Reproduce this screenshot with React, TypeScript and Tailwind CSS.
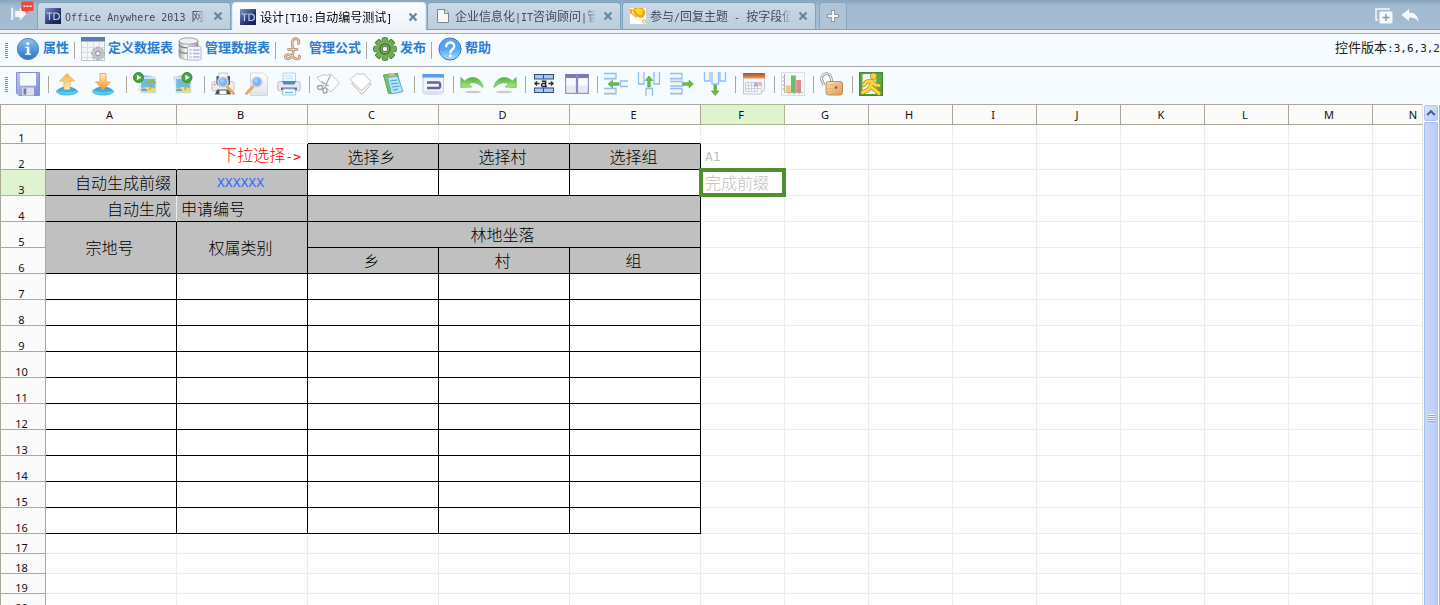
import React from "react";

/* ---------- text helper: CJK at full size, Latin in half-width mono ---------- */

const CJK = "font-['Noto_Sans_CJK_SC',sans-serif]";

function Mixed({ text, latin }: { text: string; latin: string }) {
  return (
    <>
      {text.split(/([\x20-\x7e]+)/).map((part, i) =>
        /^[\x20-\x7e]+$/.test(part) ? (
          <span key={i} className={latin}>
            {part}
          </span>
        ) : (
          part
        ),
      )}
    </>
  );
}

const LATIN_10 = "font-['DejaVu_Sans_Mono',monospace] text-[10px]";
const LATIN_11 = "font-['DejaVu_Sans_Mono',monospace] text-[11px]";
const LATIN_13 = "font-['DejaVu_Sans_Mono',monospace] text-[13px]";

/* ---------- icons ---------- */

function Svg({ children }: { children: React.ReactNode }) {
  return (
    <svg viewBox="0 0 24 24" className="size-6 shrink-0" aria-hidden="true">
      {children}
    </svg>
  );
}

const Defs = () => (
  <svg className="absolute size-0" aria-hidden="true">
    <defs>
      <linearGradient id="blueBall" x1="0" y1="0" x2="0" y2="1">
        <stop offset="0" stopColor="#8cc4f4" />
        <stop offset="1" stopColor="#2b6fc4" />
      </linearGradient>
      <linearGradient id="skyBall" x1="0" y1="0" x2="0" y2="1">
        <stop offset="0" stopColor="#5ca9f3" />
        <stop offset="0.5" stopColor="#4ea6f4" />
        <stop offset="1" stopColor="#a3e8ff" />
      </linearGradient>
      <linearGradient id="steel" x1="0" y1="0" x2="1" y2="0">
        <stop offset="0" stopColor="#a5a5a5" />
        <stop offset="0.35" stopColor="#f8f8f8" />
        <stop offset="1" stopColor="#a0a0a0" />
      </linearGradient>
      <linearGradient id="amberUp" x1="0" y1="0" x2="0" y2="1">
        <stop offset="0" stopColor="#fbb03a" />
        <stop offset="1" stopColor="#fff1cf" />
      </linearGradient>
      <linearGradient id="amberDown" x1="0" y1="0" x2="0" y2="1">
        <stop offset="0" stopColor="#fff0cc" />
        <stop offset="1" stopColor="#f8920f" />
      </linearGradient>
      <linearGradient id="dish" x1="0" y1="0" x2="0" y2="1">
        <stop offset="0" stopColor="#2a9fd8" />
        <stop offset="1" stopColor="#55c4ee" />
      </linearGradient>
      <linearGradient id="leaf" x1="0" y1="0" x2="0" y2="1">
        <stop offset="0" stopColor="#53b043" />
        <stop offset="1" stopColor="#a9ea7c" />
      </linearGradient>
      <linearGradient id="disk" x1="0" y1="0" x2="1" y2="1">
        <stop offset="0" stopColor="#bcc3f2" />
        <stop offset="1" stopColor="#7f88d2" />
      </linearGradient>
      <linearGradient id="td" x1="0" y1="0" x2="1" y2="1">
        <stop offset="0" stopColor="#7f93cf" />
        <stop offset="0.6" stopColor="#27336f" />
        <stop offset="1" stopColor="#141b4c" />
      </linearGradient>
      <linearGradient id="paper" x1="0" y1="0" x2="0" y2="1">
        <stop offset="0" stopColor="#ffffff" />
        <stop offset="1" stopColor="#e2e3e7" />
      </linearGradient>
      <linearGradient id="gold" x1="0" y1="0" x2="1" y2="1">
        <stop offset="0" stopColor="#ffe0b0" />
        <stop offset="1" stopColor="#dc9750" />
      </linearGradient>
      <linearGradient id="calTop" x1="0" y1="0" x2="0" y2="1">
        <stop offset="0" stopColor="#b04c20" />
        <stop offset="1" stopColor="#e79a63" />
      </linearGradient>
    </defs>
  </svg>
);

const InfoIcon = () => (
  <Svg>
    <circle cx="12" cy="12" r="10.6" fill="url(#blueBall)" stroke="#4a86c8" />
    <circle cx="11.8" cy="6.6" r="1.7" fill="#fff" />
    <path d="M9.200 9.800h4.200v6.800h1.600v1.200H9.200v-1.200h1.600v-5.600H9.200z" fill="#fff" />
  </Svg>
);

const GearShape = ({ cx, cy, r, fill, stroke }: { cx: number; cy: number; r: number; fill: string; stroke: string }) => (
  <g transform={`translate(${cx} ${cy}) scale(${r / 10})`}>
    {[0, 45, 90, 135].map((a) => (
      <rect key={a} x="-2.800" y="-11.600" width="5.600" height="23.200" rx="1.200" fill={fill} stroke={stroke} strokeWidth="1" transform={`rotate(${a})`} />
    ))}
    <circle r="8.800" fill={fill} />
  </g>
);

const DefineTableIcon = () => (
  <Svg>
    <rect x="0.5" y="0.5" width="23" height="23" fill="#f4f5f7" stroke="#c3c8d0" />
    <rect x="0" y="0" width="24" height="4.500" fill="#5c7cb4" />
    <path d="M1 10.500h22M1 15.500h22M1 20.500h22M6.500 5v18M12.500 5v18M18.500 5v18" stroke="#dadde3" />
    <GearShape cx={17} cy={16.500} r={5.600} fill="#c4c6c8" stroke="#97999c" />
    <circle cx="17" cy="16.500" r="2.400" fill="#eef0f2" stroke="#8d8f92" />
  </Svg>
);

const DatabaseIcon = () => (
  <Svg>
    <path d="M1 4v15c0 5 19 5 19 0V4z" fill="url(#steel)" stroke="#a2a2a2" strokeWidth="0.700" />
    <ellipse cx="10.500" cy="4" rx="9.500" ry="3.200" fill="#f0f0f0" stroke="#8c8c8c" strokeWidth="0.800" />
    <path d="M1 7.500c0 4.400 19 4.400 19 0M1 13c0 4.400 19 4.400 19 0" fill="none" stroke="#7e7e7e" strokeWidth="1.200" />
    <rect x="9.500" y="9.500" width="13.500" height="13.500" rx="1" fill="#f7f6ff" stroke="#b5b3dc" />
    <path d="M11.500 13h2M11.500 16.500h2M11.500 20h2M15 13h6.500M15 16.500h6.500M15 20h6.500" stroke="#b3b1e6" strokeWidth="1.300" />
  </Svg>
);

const POUND = "M16.500 6.500C18.500 2 12.500 -.3 10.500 4c-1.500 3.500 1.500 7.500.5 12-.7 4-3.500 6.800-6.500 5.500-2.500-1.500-.5-4.500 2.500-3.800 3 .8 5.500 5 9 4.300 1.500-.4 2-1.800 1.500-3M6.500 12.500h8.500";

const FormulaIcon = () => (
  <Svg>
    <path d={POUND} fill="none" stroke="#a9805b" strokeWidth="2.600" strokeLinecap="round" />
    <path d={POUND} fill="none" stroke="#f0cfae" strokeWidth="1.200" strokeLinecap="round" />
  </Svg>
);

const PublishIcon = () => (
  <Svg>
    <GearShape cx={12} cy={12} r={9.800} fill="#72ae50" stroke="#4a8038" />
    <circle cx="12" cy="12" r="5.800" fill="#4c6f42" />
    <circle cx="12" cy="12" r="4.200" fill="#8fbb74" />
    <circle cx="12" cy="12" r="2.800" fill="#f4fbf0" stroke="#4b6a43" />
  </Svg>
);

const HelpIcon = () => (
  <Svg>
    <circle cx="12" cy="12" r="11" fill="url(#skyBall)" stroke="#3c78bd" />
    <path d="M8.300 9.200c0-5 8-5 8 0 0 3-3.600 3-3.800 6" fill="none" stroke="#fff" strokeWidth="2.400" strokeLinecap="round" />
    <circle cx="12.400" cy="18.800" r="1.500" fill="#fff" />
  </Svg>
);

const SaveIcon = () => (
  <Svg>
    <path d="M0.500 0.500h23v23H3l-2.500-2.500z" fill="url(#disk)" stroke="#8790cd" />
    <rect x="4" y="1" width="16" height="12.500" fill="#f6f8fc" />
    <path d="M4 13.500h16" stroke="#d5d9ee" />
    <rect x="6" y="15.500" width="12" height="8" fill="#dcdfe8" />
    <rect x="7.500" y="16.500" width="2.800" height="6" fill="#6d79bd" />
  </Svg>
);

const Dish = () => (
  <>
    <path d="M1 19.500C3 16 8 14.500 12 14.500s9 1.500 11 5c0 1.500-4 4-11 4s-11-2.500-11-4z" fill="url(#dish)" />
    <path d="M2 19.500c3 2 17 2 20 0" fill="none" stroke="#8fdaf6" strokeWidth="0.800" />
  </>
);

const UploadIcon = () => (
  <Svg>
    <Dish />
    <path d="M12 1.500l7.500 7.500H15v8.500H9V9H4.500z" fill="url(#amberUp)" stroke="#f5b04a" strokeWidth="0.900" />
  </Svg>
);

const DownloadIcon = () => (
  <Svg>
    <Dish />
    <path d="M12 17.500L19.500 10H15V1.500H9V10H4.500z" fill="url(#amberDown)" stroke="#f0a545" strokeWidth="0.900" />
  </Svg>
);

const Photo = ({ x, flip }: { x: number; flip?: boolean }) => (
  <g transform={`translate(${x} 0)`}>
    <rect x="2" y="3.500" width="14" height="16" fill="#9cc4e2" stroke="#dfe4e8" transform={flip ? "rotate(-10 9 12)" : "rotate(10 9 12)"} />
    <rect x="2.500" y="6" width="15.500" height="15" fill="#6bbbee" stroke="#eceff0" strokeWidth="1.400" />
    <path d="M3 16.500q7-3 14.500 0v4H3z" fill="#ecd987" />
    <path d="M3 17.500q3-2 6 0v1.500H3z" fill="#58a9dc" />
    <path d="M12 18l1-6.500M13 11c-2-2.500-4-1.500-4.500.5M13 11c1.600-2.500 4-1.600 4.500.5M13 11c-.5-2 1-3.500 2.800-3" fill="none" stroke="#a3b91f" strokeWidth="1.500" />
  </g>
);

const Play = ({ cx, cy }: { cx: number; cy: number }) => (
  <>
    <circle cx={cx} cy={cy} r="5" fill="#45a53f" stroke="#37893a" />
    <path d={`M${cx - 1.600} ${cy - 2.800}l4.400 2.800-4.400 2.800z`} fill="#fff" />
  </>
);

const PhotoInIcon = () => (
  <Svg>
    <Photo x={5} />
    <Play cx={5.500} cy={5.500} />
  </Svg>
);

const PhotoOutIcon = () => (
  <Svg>
    <Photo x={4} flip />
    <Play cx={18} cy={5.500} />
  </Svg>
);

const Lens = ({ cx, cy, left }: { cx: number; cy: number; left?: boolean }) => (
  <>
    <path
      d={left ? `M${cx - 3.500} ${cy + 4}L${cx - 10.500} ${cy + 11.500}` : `M${cx + 3.500} ${cy + 4}l7 7.500`}
      stroke="#e8aa5c"
      strokeWidth="3"
      strokeLinecap="round"
    />
    <circle cx={cx} cy={cy} r="5" fill="#7db4f2" stroke="#ccd6e4" strokeWidth="1.600" />
    <circle cx={cx - 1} cy={cy - 1.300} r="2" fill="#a5cdf9" />
  </>
);

const PreviewIcon = () => (
  <Svg>
    <rect x="0.800" y="9.500" width="22.400" height="9.500" rx="2" fill="#ececee" stroke="#c9c9cc" />
    <path d="M5.500 4v8l4 3h5.500l4-3V4zM6 17.500h12l2 5H4z" fill="#55565b" />
    <path d="M8 1h8.500v7H8z" fill="#f6f6f6" stroke="#b5b5b8" strokeWidth="0.700" />
    <path d="M8.500 18.500h7v3.500h-7z" fill="#f8f8f8" />
    <circle cx="3.500" cy="12.500" r="1" fill="#e58a5f" />
    <Lens cx={12} cy={10} />
  </Svg>
);

const SearchPageIcon = () => (
  <Svg>
    <path d="M6.500 1h13l4 4v18.500h-17z" fill="url(#paper)" stroke="#d5d5d8" />
    <Lens cx={13} cy={10} left />
  </Svg>
);

const PrintIcon = () => (
  <Svg>
    <path d="M6 1h12.500v9H6z" fill="#eef7fe" stroke="#bcd2e6" />
    <path d="M8 4h8M8 6.500h8" stroke="#c5def3" />
    <rect x="0.800" y="9.500" width="22.400" height="9.500" rx="2" fill="#e6e8f2" stroke="#b9bdd6" />
    <path d="M5 9h14l-1.500 3.500h-11z" fill="#3f8fd8" />
    <path d="M4 15.500h16V18H4z" fill="#6b7086" />
    <path d="M6.500 17h11l1.500 6H5z" fill="#f7fcff" stroke="#a9c8e0" />
    <path d="M8 20.500h8" stroke="#68c2ee" strokeWidth="1.400" />
  </Svg>
);

const CutIcon = () => (
  <Svg>
    <path d="M0.800 5.500L8 2.500q3 2.500 7-.5l8.500 9-8.500 9-6-5-3.500-4.500z" fill="#fdfdfd" stroke="#c6c6c6" />
    <path d="M14.500 3.500c-2.500 4-3.500 6.500-5 11M5.500 9.500l7 4.500" stroke="#a6a6a6" strokeWidth="1.200" fill="none" />
    <ellipse cx="4" cy="15.500" rx="2.600" ry="2" fill="none" stroke="#a0a0a0" strokeWidth="1.300" />
    <ellipse cx="9" cy="18.500" rx="2" ry="2.600" fill="none" stroke="#a0a0a0" strokeWidth="1.300" />
  </Svg>
);

const CopyIcon = () => (
  <Svg>
    <path d="M2.500 11.500l8-6 11.500 7-9 10z" fill="#f2f2f2" stroke="#bdbdbd" />
    <path d="M1 7.500L8 1.500q3.500 2 6.500 0L22 9.500l-9.500 9z" fill="#fdfdfd" stroke="#c3c3c3" />
  </Svg>
);

const PasteIcon = () => (
  <Svg>
    <path d="M1.500 3L15.500 1.500l4 18-13 2z" fill="#79c267" stroke="#57a348" />
    <path d="M5.500 5.500l10-1.500 5.500 15.500L9.500 22z" fill="#b9e3f9" stroke="#62acde" />
    <path d="M8 9l7.500-1M9 12l7.500-1M10 15l7.500-1M11 18l5-.8" stroke="#4aa4df" strokeWidth="1.200" />
    <path d="M6 1h6l1 3H7z" fill="#d9bd68" />
  </Svg>
);

const LinkFrameIcon = () => (
  <Svg>
    <rect x="2" y="2.500" width="20.500" height="17.500" fill="#f0f3fa" stroke="#c6cde4" />
    <rect x="1.500" y="2" width="21.500" height="3.600" fill="#5b9fe8" />
    <path d="M6 10.500h11.500c2.200 0 2.200 5.500 0 5.500H6" fill="none" stroke="#65629f" strokeWidth="2.400" />
    <ellipse cx="12" cy="22" rx="10" ry="1" fill="#dadfe3" />
  </Svg>
);

const UndoIcon = () => (
  <Svg>
    <ellipse cx="13" cy="20" rx="8" ry="1.300" fill="#c9cdc9" />
    <path d="M0.800 5.500v10l11-.5-3.300-3c4-2.500 9-1.500 14.500 3.500-1-9.500-11-13.500-18.300-6.500z" fill="url(#leaf)" stroke="#6ab556" strokeWidth="0.700" />
  </Svg>
);

const RedoIcon = () => (
  <Svg>
    <ellipse cx="11" cy="20" rx="8" ry="1.300" fill="#c9cdc9" />
    <path d="M23.200 5.500v10l-11-.5 3.300-3c-4-2.500-9-1.500-14.500 3.500 1-9.500 11-13.500 18.300-6.500z" fill="url(#leaf)" stroke="#6ab556" strokeWidth="0.700" />
  </Svg>
);

const MergeIcon = () => (
  <Svg>
    <path d="M2 2h20v19H2z" fill="#3a4a70" />
    <path d="M3 3h8v3.500H3zM12 3h9v3.500h-9zM3 16.500h8V20H3zM12 16.500h9V20h-9z" fill="#a5cbf2" />
    <rect x="2" y="7.500" width="20" height="8" fill="#f2f4f7" />
    <path d="M2.500 11.500h5M5 9.500l-2 2 2 2M21.500 11.500h-5M19 9.500l2 2-2 2" fill="none" stroke="#333" strokeWidth="1.300" />
    <path d="M9.800 9.300h3.800v5.200M13.600 11.500h-3.200q-1.800 1.500 0 3h3.200l1.200.2" fill="none" stroke="#222" strokeWidth="1.500" />
  </Svg>
);

const SplitIcon = () => (
  <Svg>
    <rect x="0.600" y="2.600" width="22.800" height="18.800" fill="#e6e9f4" stroke="#9794c4" strokeWidth="1.200" />
    <rect x="0.500" y="2" width="23" height="4" fill="#7d79b4" />
    <path d="M12 3v18" stroke="#8d89be" strokeWidth="2.200" />
    <path d="M1.500 6.500h9v7h-9zM13.500 6.500h9v7h-9z" fill="#f9fafd" />
  </Svg>
);

const EDGE = { fill: "#f4f6f9", stroke: "#8fc0f2", strokeWidth: 1.3 };
const ARROW = { fill: "#6cbd4a", stroke: "#4c9c33", strokeWidth: 0.6 };

const Bars = () => (
  <>
    <path d="M0 1.500h12v5H0M0 16.500h12v5H0" {...EDGE} />
    <path d="M0 7.300h12.500M0 22.300h12.500" stroke="#cbd0d8" />
  </>
);

const RowInsertIcon = () => (
  <Svg>
    <Bars />
    <path d="M24 9h-7.500v5.500H24" {...EDGE} />
    <path d="M4 12l4.500-3.800v2.500H15v2.600H8.500v2.500z" {...ARROW} />
  </Svg>
);

const RowDeleteIcon = () => (
  <Svg>
    <Bars />
    <path d="M0 9.500h12.500v4.500H0" {...EDGE} />
    <path d="M23.500 12L19 8.200v2.500h-6v2.600h6v2.500z" {...ARROW} />
  </Svg>
);

const ColInsertIcon = () => (
  <Svg>
    <path d="M1.500 0v12h5.500V0M17 0v12h5.500V0" {...EDGE} />
    <path d="M9 24v-7.500h6.500V24" {...EDGE} />
    <path d="M12 4L8.200 8.500h2.500V15h2.600V8.500h2.500z" {...ARROW} />
  </Svg>
);

const ColDeleteIcon = () => (
  <Svg>
    <path d="M1.500 0v9h5.500V0M17 0v9h5.500V0M9 0v12h6.500V0" {...EDGE} />
    <path d="M12.200 23.500L8.400 19h2.500v-6h2.600v6H16z" {...ARROW} />
  </Svg>
);

const CalendarIcon = () => (
  <Svg>
    <path d="M1.500 2.500h21V18l-4 4h-17z" fill="#f7f7f8" stroke="#c6c6ca" />
    <rect x="1" y="1" width="22" height="5.500" rx="0.500" fill="url(#calTop)" />
    <path d="M3.500 10.500h16M3.500 13.500h16M3.500 16.500h16M3.500 19.500h12M3.500 10.500v9M6.500 10.500v9M9.500 10.500v9M12.500 10.500v9M15.500 10.500v9M19.500 10.500v6" stroke="#c9ccda" strokeWidth="0.900" />
    <path d="M12 10.500h4v4h-4z" fill="#9db2e8" />
    <path d="M16.500 10h3v3.500h-3z" fill="#f0b3a5" />
    <path d="M18.500 22v-4h4z" fill="#dadade" />
  </Svg>
);

const ChartIcon = () => (
  <Svg>
    <rect x="0.500" y="0.500" width="23" height="23" fill="#f6f7f8" stroke="#dcdfe2" />
    <path d="M3.500 2v18.500H22" fill="none" stroke="#b0b3b6" />
    <path d="M1.500 5h2M1.500 9h2M1.500 13h2M1.500 17h2M8 20.500v2M13 20.500v2M18 20.500v2" stroke="#a9acb0" />
    <rect x="5" y="13.500" width="4.800" height="7" fill="#eec873" />
    <rect x="10" y="3.500" width="4.800" height="17" fill="#6cbb6e" />
    <rect x="15.200" y="8" width="4.800" height="12.500" fill="#e3868b" />
  </Svg>
);

const UnlockIcon = () => (
  <Svg>
    <path d="M4 13L1.800 8C0.500 1 9.500-.5 11 5.500l.8 5" fill="none" stroke="#8d8d8d" strokeWidth="2.800" />
    <path d="M4 13L1.800 8C0.500 1 9.500-.5 11 5.500l.8 5" fill="none" stroke="#ececec" strokeWidth="1.300" />
    <rect x="6" y="9.500" width="16.500" height="13.500" rx="2.500" fill="url(#gold)" stroke="#c58c55" />
    <path d="M7 13h14.500M7 16.500h14.500M7 20h14.500" stroke="#dcae7c" strokeWidth="0.700" />
    <circle cx="16" cy="15.500" r="1.300" fill="#8a5d36" />
  </Svg>
);

const RUNNER = "M13 9l-1.500 5.500 4 3L20 21.500M11.500 14.500L9 18l-5.500 2.500M13 9L8 9.500l-3.500 3.500M13 9.500l3 3.500 4 .5";

const ExitIcon = () => (
  <Svg>
    <rect x="0.700" y="0.700" width="22.600" height="22.600" fill="#58a844" stroke="#468a36" strokeWidth="1.400" />
    <rect x="3.500" y="2" width="13.500" height="20" fill="#f0f6ee" />
    <path d="M17 2v20" stroke="#8fc57f" />
    <g fill="none" strokeLinecap="round" strokeLinejoin="round">
      <path d={RUNNER} stroke="#9a7c24" strokeWidth="4.200" />
      <path d={RUNNER} stroke="#fcd535" strokeWidth="3.100" />
    </g>
    <circle cx="14.500" cy="4.200" r="3.200" fill="#fcd535" stroke="#9a7c24" strokeWidth="0.700" />
  </Svg>
);

/* ---------- tab strip ---------- */

const TdLogo = () => (
  <svg viewBox="0 0 16 16" className="size-4 shrink-0" aria-hidden="true">
    <rect width="16" height="16" fill="url(#td)" />
    <path d="M1.500 5h6M4.500 5v7M9 5v6.500h2c4.500 0 4.500-6.500 0-6.500z" fill="none" stroke="#c3cfee" strokeWidth="1.200" />
  </svg>
);

const PageLogo = () => (
  <svg viewBox="0 0 16 16" className="size-4 shrink-0" aria-hidden="true">
    <path d="M2.500 1.500h7.500l3.500 3.500v9.500h-11z" fill="#f7f8f8" stroke="#7d8790" />
    <path d="M9.500 1.500V5.500h4" fill="#dfe3e6" stroke="#7d8790" />
  </svg>
);

const ChatLogo = () => (
  <svg viewBox="0 0 16 16" className="size-4 shrink-0" aria-hidden="true">
    <rect width="16" height="16" fill="#fdfcf8" />
    <path d="M0 1h3L2 5l4 3 1 2.500L0 5zM4 0h9l2.500 4-1.500 5-4 1-4-2-3-4z" fill="#f9a70e" />
    <path d="M5 1.500q4-2.500 8 1l-1.500 4.500q-4 .5-6.500-5.500z" fill="#ffdb2c" />
    <circle cx="14" cy="13.500" r="1.500" fill="#fff" stroke="#f3a12c" />
  </svg>
);

function Tab({ logo, title, active }: { logo: React.ReactNode; title: string; active?: boolean }) {
  return (
    <div
      className={
        "flex w-[194px] items-center rounded-t border border-b-0 px-[7px] " +
        (active
          ? "-mb-px h-[28px] border-[#dfeaf3] bg-linear-to-b from-[#fafcfe] to-[#eff2f9] text-black"
          : "h-[27px] border-[#7ba3be] bg-linear-to-b from-[#c9d9e6] to-[#bccddd] text-[#3f4d5a]")
      }
    >
      {logo}
      <a
        href="#"
        className="ml-1 min-w-0 flex-1 overflow-hidden pt-0.5 text-[12px] leading-[18px] whitespace-pre [mask-image:linear-gradient(to_right,black_92%,transparent)]"
      >
        <Mixed text={title} latin={LATIN_10} />
      </a>
      <button type="button" aria-label={"关闭 " + title} className="ml-[7px] shrink-0">
        <svg viewBox="0 0 10 10" className="size-2.5" aria-hidden="true">
          <path d="M1.500 1.500l7 7M8.500 1.500l-7 7" stroke="#66859f" strokeWidth="2.200" />
        </svg>
      </button>
    </div>
  );
}

function TabStrip() {
  return (
    <nav className="flex h-[30px] shrink-0 items-end gap-px border-b border-[#7aa3be] bg-linear-to-b from-[#87a5be] from-0% via-[#a2bbd1] via-20% to-[#a5bdd3]">
      <button type="button" aria-label="展开" className="h-full w-9 shrink-0">
        <svg viewBox="0 0 36 30" className="h-full w-9" aria-hidden="true">
          <path d="M12 8v12.500" stroke="#f3f7fa" strokeWidth="2" />
          <path d="M15 11.500h5V8l6.500 6.500-6.500 6.500v-3.500h-5z" fill="#f7f9fb" stroke="#dbe5ee" strokeWidth="0.500" />
          <path d="M22.500 1.500h10.500q1 0 1 1v8q0 1-1 1h-4l-2.500 2.500v-2.500h-4q-1 0-1-1v-8q0-1 1-1z" fill="#ee4a36" />
          <path d="M23.700 6.500h2M26.900 6.500h2M30.100 6.500h2" stroke="#fff" strokeWidth="1.700" />
        </svg>
      </button>
      <Tab logo={<TdLogo />} title="Office Anywhere 2013 网络" />
      <Tab logo={<TdLogo />} title="设计[T10:自动编号测试]" active />
      <Tab logo={<PageLogo />} title="企业信息化|IT咨询顾问|管" />
      <Tab logo={<ChatLogo />} title="参与/回复主题 - 按字段值" />
      <button type="button" aria-label="新建标签" className="ml-0.5 flex h-[27px] w-7 items-center justify-center rounded-t border border-b-0 border-[#86a5bf] bg-[#b0c4d6]">
        <svg viewBox="0 0 12 12" className="size-3" aria-hidden="true">
          <path d="M6 0v12M0 6h12" stroke="#8699aa" strokeWidth="4" />
          <path d="M6 1v10M1 6h10" stroke="#f4f7fa" strokeWidth="2.200" />
        </svg>
      </button>
      <div className="ml-auto flex h-full items-center gap-2 pt-0.5 pr-[21px]">
        <button type="button" aria-label="新窗口">
          <svg viewBox="0 0 18 16" className="h-4 w-[18px]" aria-hidden="true">
            <path d="M14 2V1H1v11h2" fill="none" stroke="#f4f8fb" strokeWidth="1.500" />
            <rect x="4.500" y="3.500" width="13" height="12" rx="1.500" fill="#f6f9fb" stroke="#d0dce6" strokeWidth="0.600" />
            <path d="M11 6v7M7.500 9.500h7" stroke="#8299ab" strokeWidth="1.400" />
          </svg>
        </button>
        <button type="button" aria-label="返回">
          <svg viewBox="0 0 18 16" className="h-4 w-[18px]" aria-hidden="true">
            <path d="M0.500 7L8 1v3.500c5.500 0 9 3 9.500 9.500-2-3.500-4.500-4.500-9.500-4.500V13z" fill="#f6f9fb" />
          </svg>
        </button>
      </div>
    </nav>
  );
}

/* ---------- toolbars ---------- */

const Grip = () => (
  <span className="mr-2 ml-[5px] flex flex-col gap-px">
    {Array.from({ length: 8 }, (_, i) => (
      <span key={i} className="h-px w-[3px] bg-[#8d897a]" />
    ))}
  </span>
);

const Separator = () => <span className="h-[17px] w-px shrink-0 bg-[#aca899]" />;

type Command = [label: string, Icon: () => React.JSX.Element];

const MENU: Command[][] = [
  [["属性", InfoIcon]],
  [
    ["定义数据表", DefineTableIcon],
    ["管理数据表", DatabaseIcon],
  ],
  [["管理公式", FormulaIcon]],
  [["发布", PublishIcon]],
  [["帮助", HelpIcon]],
];

const TOOLS: { wide?: boolean; items: Command[] }[] = [
  { items: [["保存", SaveIcon]] },
  { wide: true, items: [["导入", UploadIcon], ["导出", DownloadIcon]] },
  { wide: true, items: [["插入图片", PhotoInIcon], ["移除图片", PhotoOutIcon]] },
  { items: [["打印预览", PreviewIcon], ["页面预览", SearchPageIcon], ["打印", PrintIcon]] },
  { items: [["剪切", CutIcon], ["复制", CopyIcon], ["粘贴", PasteIcon]] },
  { items: [["控件", LinkFrameIcon]] },
  { items: [["撤销", UndoIcon], ["重做", RedoIcon]] },
  { items: [["合并单元格", MergeIcon], ["拆分单元格", SplitIcon]] },
  { items: [["插入行", RowInsertIcon], ["插入列", ColInsertIcon], ["删除行", RowDeleteIcon], ["删除列", ColDeleteIcon]] },
  { items: [["日历", CalendarIcon]] },
  { items: [["图表", ChartIcon]] },
  { items: [["解锁", UnlockIcon]] },
  { items: [["退出", ExitIcon]] },
];

function MenuBar() {
  return (
    <div className="flex h-[33px] shrink-0 items-center overflow-hidden border-t border-[#aaa9ab] bg-[#f5fbff]">
      <Grip />
      {MENU.map((group, g) => (
        <React.Fragment key={g}>
          {g > 0 && <Separator />}
          <div className={"flex items-center gap-[5px] pr-[5px] " + (g > 0 ? "pl-[6px]" : "")}>
            {group.map(([label, Icon]) => (
              <button key={label} type="button" className="flex items-center gap-[3px] pb-0.5 text-[13px] leading-[20px] font-bold whitespace-nowrap text-[#2b7cd3]">
                <Icon />
                <span className="pb-1">{label}</span>
              </button>
            ))}
          </div>
        </React.Fragment>
      ))}
      <p className="ml-auto pb-1 text-[13px] leading-[20px] whitespace-nowrap text-[#222]">
        <Mixed text="控件版本:3,6,3,2" latin={LATIN_11} />
      </p>
    </div>
  );
}

function ToolBar() {
  return (
    <div className="flex h-[38px] shrink-0 items-center overflow-hidden border-t border-[#aaa9ab] bg-[#f5fbff] pb-[3px]">
      <Grip />
      {TOOLS.map(({ wide, items }, g) => (
        <React.Fragment key={g}>
          {g > 0 && <Separator />}
          <div className={"flex items-center " + (g > 0 ? "pl-[6px] " : "") + (wide ? "gap-3 pr-[11px]" : "gap-[9px] pr-2")}>
            {items.map(([label, Icon]) => (
              <button key={label} type="button" title={label} aria-label={label}>
                <Icon />
              </button>
            ))}
          </div>
        </React.Fragment>
      ))}
    </div>
  );
}

/* ---------- sheet ---------- */

const COLUMNS = "ABCDEFGHIJKLMN".split("");
const LIGHT = "border-[#ececec]";
const GREY = "border-black bg-[#c0c0c0]";
const CENTER = " pr-[3px] text-center";

type Cell = { text?: string; cols?: number; rows?: number; look: string; selected?: boolean };

const many = (n: number, look: string): Cell[] => Array.from({ length: n }, () => ({ look }));
const REST = many(9, LIGHT);

const ROWS: Cell[][] = [
  [...many(2, LIGHT), ...many(3, "border-r-[#ececec] border-b-black"), ...REST],
  [
    { look: "border-r-white border-b-black" },
    { text: "下拉选择->", look: "border-black pr-[6px] text-right text-[#ff0000]" },
    { text: "选择乡", look: GREY + CENTER },
    { text: "选择村", look: GREY + CENTER },
    { text: "选择组", look: GREY + CENTER },
    { text: "A1", look: LIGHT + " pl-1 text-[#c0c0c0]" },
    ...many(8, LIGHT),
  ],
  [
    { text: "自动生成前缀", look: GREY + " pr-[5px] text-right" },
    { text: "XXXXXX", look: GREY + CENTER + " text-[#3366ff]" },
    ...many(3, "border-black"),
    { text: "完成前缀", look: LIGHT + " pl-1 text-[#c0c0c0]", selected: true },
    ...many(8, LIGHT),
  ],
  [
    { text: "自动生成", look: "border-r-[#ececec] border-b-black bg-[#c0c0c0] pr-[5px] text-right" },
    { text: "申请编号", look: GREY + " pl-1" },
    { cols: 3, look: GREY },
    ...REST,
  ],
  [
    { text: "宗地号", rows: 2, look: GREY + CENTER },
    { text: "权属类别", rows: 2, look: GREY + CENTER },
    { text: "林地坐落", cols: 3, look: GREY + CENTER },
    ...REST,
  ],
  [
    { text: "乡", look: GREY + CENTER },
    { text: "村", look: GREY + CENTER },
    { text: "组", look: GREY + CENTER },
    ...REST,
  ],
  ...Array.from({ length: 10 }, () => [...many(5, "border-black"), ...REST]),
  ...Array.from({ length: 4 }, () => many(14, LIGHT)),
];

const rowHeight = (n: number) => (n === 1 ? "h-[19px]" : n <= 16 ? "h-[26px]" : "h-[20px]");

function Sheet() {
  const head = "border-r border-b py-0 pl-0 font-['Noto_Sans',sans-serif] text-[11px] font-normal text-[#111] ";
  const plain = "border-[#aca899] bg-[#fafafa] ";
  const picked = "border-[#a9b98b] bg-[#dff3d1] ";
  return (
    <table className="w-[1457px] table-fixed border-separate border-spacing-0">
      <colgroup>
        <col className="w-[46px]" />
        {COLUMNS.map((c, i) => (
          <col key={c} className={i < 5 ? "w-[131px]" : "w-[84px]"} />
        ))}
      </colgroup>
      <thead>
        <tr className="h-[21px]">
          <td className={head + plain + "border-t border-l"} />
          {COLUMNS.map((c) => (
            <th key={c} scope="col" className={head + (c === "F" ? picked : plain) + "border-t pr-[3px] leading-[14px]"}>
              {c}
            </th>
          ))}
        </tr>
      </thead>
      <tbody>
        {ROWS.map((cells, r) => (
          <tr key={r} className={rowHeight(r + 1)}>
            <th
              scope="row"
              className={head + (r === 2 ? "border-x-[#aca899] border-b-[#a9b98b] bg-[#dff3d1] " : plain) + "border-l pr-[3px] align-bottom leading-[10px]"}
            >
              {r + 1}
            </th>
            {cells.map((cell, i) => (
              <td
                key={i}
                colSpan={cell.cols}
                rowSpan={cell.rows}
                className={"border-r border-b pt-0 pb-0.5 text-[16px] leading-[16px] font-light whitespace-nowrap " + (cell.selected ? "relative " : "") + cell.look}
              >
                {cell.text && <Mixed text={cell.text} latin={LATIN_13} />}
                {cell.selected && <span className="absolute -inset-0.5 border-4 border-[#4f902c]" />}
              </td>
            ))}
          </tr>
        ))}
      </tbody>
    </table>
  );
}

function ScrollRail() {
  return (
    <div className="flex w-[18px] shrink-0 flex-col border-l border-[#e6e3d6] bg-[#fdfdfb] pt-px pl-px">
      <div className="flex flex-1 flex-col gap-px border-r border-[#9db4ec] pr-px">
        <button type="button" aria-label="向上滚动" className="flex h-4 items-center justify-center rounded-xs border border-[#b2c6f6] bg-linear-to-br from-[#d8e3fe] to-[#b7cbfb]">
          <svg viewBox="0 0 10 8" className="h-2 w-2.5" aria-hidden="true">
            <path d="M1.200 6L5 2.200 8.800 6" fill="none" stroke="#4d6185" strokeWidth="2.200" />
          </svg>
        </button>
        <div className="flex flex-1 flex-col items-center rounded-t-xs border border-b-0 border-[#aac0f2] bg-linear-to-r from-[#c9d7fd] to-[#b8ccf9]">
          <span className="grow-[8]" />
          <span className="flex flex-col gap-px">
            {Array.from({ length: 4 }, (_, i) => (
              <span key={i} className="h-px w-[7px] bg-[#7ea6f4] shadow-[0_-1px_0_#eef4fe]" />
            ))}
          </span>
          <span className="grow-[5]" />
        </div>
      </div>
    </div>
  );
}

export default function App() {
  return (
    <div className={"flex h-screen flex-col overflow-hidden bg-white text-black " + CJK}>
      <Defs />
      <TabStrip />
      <div className="h-[3px] shrink-0 bg-[#eff2f9]" />
      <MenuBar />
      <ToolBar />
      <main className="flex min-h-0 flex-1">
        <div className="min-w-0 flex-1 overflow-hidden">
          <Sheet />
        </div>
        <ScrollRail />
      </main>
    </div>
  );
}
